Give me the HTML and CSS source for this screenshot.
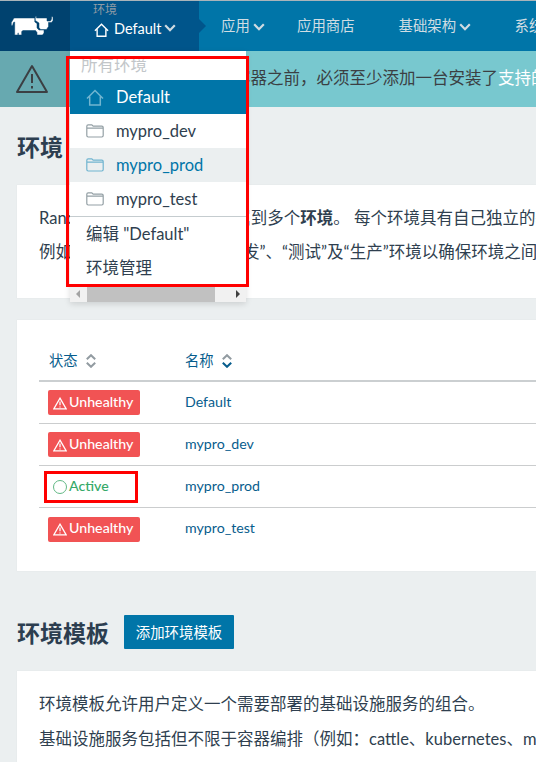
FILE: index.html
```html
<!DOCTYPE html>
<html lang="zh-CN">
<head>
<meta charset="utf-8">
<title>环境</title>
<link rel="stylesheet" href="styles.css">
</head>
<body>
<svg class="defs" aria-hidden="true">
  <symbol id="house" viewBox="0 0 18 17"><path d="M1 9.5 9 1.5l8 8M3.7 7.5V16h10.6V7.5"/></symbol>
  <symbol id="folder" viewBox="0 0 18 14"><path d="M.8 11.6V2.2Q.8.8 2.2.8h3.6L7.2 2.2h8.6q1.400 0 1.400 1.400v8q0 1.400-1.400 1.400H2.200Q.8 13 .8 11.600ZM.8 4.200h16.400"/></symbol>
  <symbol id="warn" viewBox="0 0 34 30"><path d="M17 2 32 28H2ZM17 10v9M17 22v2.500"/></symbol>
  <symbol id="chevron" viewBox="0 0 12 8"><path d="m1.200 1.300 4.800 4.900 4.800-4.900"/></symbol>
</svg>

<header class="topbar">
  <div class="logo">
    <svg viewBox="0 0 42 20"><path d="M3 2H23.800V6L26 7.500V12L28 14H33V17L31.500 19H26V16.500L24.500 14.500H12L10.700 15.500V19H6.800V17H7.500V19H3.700V6L2.400 6.600 1.600 9.500H.3V6.500Z"/><path d="M24.300.5H25.500V2H36V5H39.500L40.500 3V.7H42V4.500L40.500 6.500H37.500V10.500L35.500 13.500H29.500L28 11.500V7L24.300 4.500Z"/></svg>
  </div>
  <div class="env">
    <span class="env-label">环境</span>
    <span class="env-name"><svg class="house"><use href="#house"/></svg>Default<svg class="chev"><use href="#chevron"/></svg></span>
  </div>
  <nav>
    <a class="n-app">应用<svg class="chev"><use href="#chevron"/></svg></a>
    <a class="n-store">应用商店</a>
    <a class="n-infra">基础架构<svg class="chev"><use href="#chevron"/></svg></a>
    <a>系统</a>
  </nav>
</header>

<div class="banner">
  <div class="banner-icon"><svg><use href="#warn"/></svg></div>
  <p>在添加服务或启动容器之前，必须至少添加一台安装了<a>支持的</a></p>
</div>

<main>
  <h1 class="first">环境</h1>
  <section class="card intro">
    <p>Rancher 支持将资源分组归属到多个<b>环境</b>。 每个环境具有自己独立的基</p>
    <p>例如，您可以创建单独的“开发”、“测试”及“生产”环境以确保环境之间</p>
  </section>
  <section class="card list">
    <div class="row head"><span class="col">状态<svg class="sort" viewBox="0 0 10 14"><path d="M.8 5.300 5 1.200l4.200 4.100"/><path class="down" d="M.8 8.700 5 12.800l4.200-4.100"/></svg></span><span>名称<svg class="sort active" viewBox="0 0 10 14"><path d="M.8 5.300 5 1.200l4.200 4.100"/><path class="down" d="M.8 8.700 5 12.800l4.200-4.100"/></svg></span></div>
    <div class="row"><span class="col"><span class="badge"><svg><use href="#warn"/></svg>Unhealthy</span></span><a>Default</a></div>
    <div class="row"><span class="col"><span class="badge"><svg><use href="#warn"/></svg>Unhealthy</span></span><a>mypro_dev</a></div>
    <div class="row"><span class="col"><span class="badge ok"><i></i>Active</span></span><a>mypro_prod</a></div>
    <div class="row"><span class="col"><span class="badge"><svg><use href="#warn"/></svg>Unhealthy</span></span><a>mypro_test</a></div>
  </section>
  <div class="title-row"><h1>环境模板</h1><button>添加环境模板</button></div>
  <section class="card templates">
    <p>环境模板允许用户定义一个需要部署的基础设施服务的组合。</p>
    <p>基础设施服务包括但不限于容器编排（例如：cattle、kubernetes、m</p>
  </section>
</main>

<div class="menu">
  <div class="menu-title">所有环境</div>
  <a class="item selected"><svg class="house"><use href="#house"/></svg>Default</a>
  <a class="item"><svg><use href="#folder"/></svg>mypro_dev</a>
  <a class="item hover"><svg><use href="#folder"/></svg>mypro_prod</a>
  <a class="item"><svg><use href="#folder"/></svg>mypro_test</a>
  <a class="item edit">编辑 "Default"</a>
  <a class="item">环境管理</a>
  <div class="scroll"><i class="left"></i><i class="thumb"></i><i class="right"></i></div>
</div>
<div class="mark mark-menu"></div>
<div class="mark mark-active"></div>
</body>
</html>
```
FILE: styles.css
```css
* { box-sizing: border-box; }
body {
  margin: 0;
  width: 536px;
  height: 762px;
  overflow: hidden;
  position: relative;
  background: #ebeff0;
  color: #2f3f4f;
  font: 16.5px/34px Lato, "Noto Sans CJK SC", sans-serif;
  white-space: nowrap;
}
p, h1 { margin: 0; }
svg { fill: none; stroke: currentColor; flex: none; }
.defs { position: absolute; width: 0; height: 0; }

.topbar { display: flex; height: 51px; border-top: 1px solid #a9b4ba; background: #0075a8; overflow: hidden; }
.logo { width: 70px; flex: none; background: #00426f; padding: 15px 0 0 11px; }
.logo svg { display: block; width: 42px; height: 20px; fill: #fff; stroke: #00426f; stroke-width: .5; }
.env { position: relative; width: 129px; flex: none; background: #00558b; padding: 2px 0 0 23px; color: #fff; }
.env::after { content: ""; position: absolute; left: 129px; top: 18px; border: 7px solid transparent; border-left-color: #00558b; border-right: 0; }
.env-label { display: block; font-size: 12px; line-height: 14px; color: #8f9ba5; }
.env-name { display: flex; align-items: center; height: 24px; font-size: 14.5px; }
.env-name .house { width: 15px; height: 14px; margin: 2px 5px 0 1px; stroke-width: 1.7; }
.chev { width: 12px; height: 8px; stroke: #cfdbe2; stroke-width: 2.2; margin-left: 3px; }
.env-name .chev { margin-top: -2px; }
nav { display: flex; color: #d0dde3; font-size: 14.4px; line-height: 50px; padding-left: 22px; }
nav .n-app { width: 76px; }
nav .n-store { width: 101.5px; }
nav .n-infra { width: 116px; }

.banner { display: flex; height: 56px; background: #78c8cf; color: #3b3f43; overflow: hidden; }
.banner-icon { width: 70px; flex: none; background: #67a9b0; padding: 13px 0 0 15px; }
.banner-icon svg { display: block; width: 34px; height: 30px; stroke-width: 2; stroke-linejoin: round; }
.banner p { padding-left: 32px; line-height: 55px; }
.banner a { color: #fff; }

main { padding-left: 17px; }
h1 { font-size: 23px; line-height: 36px; height: 34px; font-weight: 700; color: #2c3e50; }
.first { height: 78px; padding: 22px 0; }
.card { background: #fff; padding-left: 22px; box-shadow: 0 0 1px #d9dedf; }
.intro { height: 113px; padding-top: 16px; overflow: hidden; }
.list { height: 251px; margin-top: 22px; padding-top: 21px; }
.row { display: flex; align-items: center; height: 42px; border-bottom: 1px solid #cbcdce; font-size: 14.2px; line-height: 24px; color: #075d8d; }
.row > a { padding-bottom: 2px; }
.row:last-child { border: 0; }
.row.head { height: 41px; border-bottom: 2px solid #cbcfd1; font-size: 14.3px; }
.row.head > span { display: flex; align-items: center; padding-top: 1px; }
.row .col { width: 146px; flex: none; padding-left: 9px; }
.row.head .col { padding-left: 10px; }
.sort { width: 10px; height: 14px; margin-left: 8px; stroke: #929ba1; stroke-width: 2; }
.sort.active .down { stroke: #075d8d; }
.badge { display: flex; align-items: center; width: 92px; height: 25px; padding: 0 0 2px 5px; border-radius: 2px; background: #f15354; color: #fff; font-size: 14.2px; font-weight: 500; }
.badge svg { width: 14px; height: 13px; margin: 3px 2px 0 0; stroke-width: 3; }
.badge.ok { background: none; color: #35a968; }
.badge i { width: 14px; height: 14px; margin: 3px 2px 0 0; border: 1px solid #62b985; border-radius: 50%; }
.title-row { display: flex; height: 100px; padding-top: 44px; }
.title-row h1 { width: 107px; }
button { width: 110px; height: 34px; padding: 0 0 2px; border: 0; border-radius: 1px; background: #0075a8; color: #fff; font: 14.4px Lato, "Noto Sans CJK SC", sans-serif; }
.templates { height: 110px; padding-top: 16px; overflow: hidden; }
.templates p { line-height: 35px; }

.menu { position: absolute; left: 70px; top: 51px; width: 176px; background: #fff; box-shadow: 0 2px 6px #0002; }
.menu-title { height: 29px; padding-left: 11px; line-height: 29px; color: #c2c6c9; }
.item { display: flex; align-items: center; height: 34px; padding-left: 16px; color: #2f3f4f; }
.item svg { width: 18px; height: 14px; margin-right: 12px; color: #94a0a5; stroke-width: 1.2; }
.item .house { height: 17px; color: #71b5d0; stroke-width: 1.5; }
.item.selected { background: #0075a8; color: #fff; }
.item.hover { background: #ebeff0; color: #0075a8; }
.item.hover svg { color: #71b5d0; }
.item.edit { height: 35px; border-top: 1px solid #c5cccf; }
.scroll { display: flex; align-items: center; height: 17px; background: #f1f1f1; }
.scroll .left, .scroll .right { border: 4px solid transparent; }
.scroll .left { border-right-color: #a3a3a3; border-left: 0; margin: 0 7px 0 6px; }
.scroll .thumb { width: 128px; height: 17px; background: #c1c1c1; }
.scroll .right { border-left-color: #404040; border-right: 0; margin-left: 21px; }

.mark { position: absolute; border: 3px solid #f00; }
.mark-menu { left: 66px; top: 56px; width: 183px; height: 231px; }
.mark-active { left: 44px; top: 471px; width: 94px; height: 32px; }
```
